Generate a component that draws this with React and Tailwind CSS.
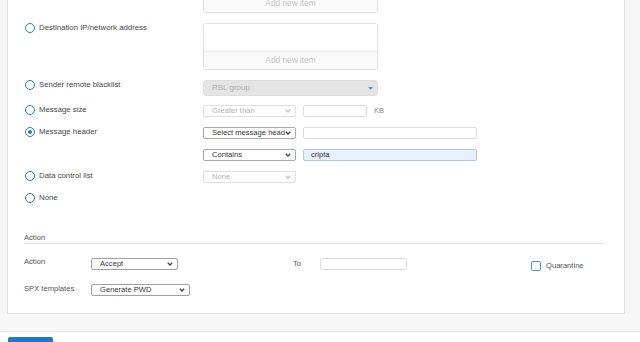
import React from "react";

const font = { fontFamily: '"Liberation Sans", Arial, sans-serif' };

function Radio({ checked, label }) {
  return (
    <div className="flex items-center h-[10px] gap-[4px]">
      <span className="w-[10px] h-[10px] rounded-full border-[1.6px] border-[#2a78c2] flex items-center justify-center shrink-0">
        {checked && <span className="w-[3.5px] h-[3.5px] rounded-full bg-[#2a78c2]" />}
      </span>
      <span className="text-[7.8px] leading-[10px] text-[#474747] whitespace-nowrap">{label}</span>
    </div>
  );
}

function Chevron({ color }) {
  return (
    <svg width="6" height="4" viewBox="0 0 6 4" className="shrink-0">
      <path d="M0.8 0.8 L3 3 L5.2 0.8" fill="none" stroke={color} strokeWidth="1.3" />
    </svg>
  );
}

function Select({ text, disabled, w, border }) {
  return (
    <div
      className={`${w} h-[12px] flex items-center justify-between pl-[8px] pr-[4px] rounded-[2px] border bg-white ${
        border ? border : disabled ? "border-[#e0e0e0]" : "border-[#a8a8a8]"
      }`}
    >
      <span
        className={`text-[7.6px] leading-[10px] whitespace-nowrap overflow-hidden ${
          disabled ? "text-[#b4b4b4]" : "text-[#383838]"
        }`}
      >
        {text}
      </span>
      <Chevron color={disabled ? "#c4c4c4" : "#444"} />
    </div>
  );
}

function ItemBox() {
  return (
    <div className="w-[175px] h-[47px] border border-[#e2e2e2] rounded-[3px] flex flex-col overflow-hidden">
      <div className="flex-1 bg-white" />
      <div className="h-[18px] bg-[#fafafa] border-t border-[#ececec] flex items-center justify-center text-[8.3px] text-[#c4c4c4]">
        Add new item
      </div>
    </div>
  );
}

function Row({ label, checked, children }) {
  return (
    <div className="flex items-start">
      <div className="w-[179px] shrink-0 pl-[1px]">{label && <Radio checked={checked} label={label} />}</div>
      <div className="flex items-center gap-[7px]">{children}</div>
    </div>
  );
}

export default function App() {
  return (
    <div className="w-[640px] h-[342px] overflow-hidden bg-[#f7f7f7] flex flex-col" style={font}>
      <div className="mt-[-40px] ml-[7px] mr-[15px] bg-white border-l border-r border-b border-[#e3e3e3] pl-[16px] pr-[19px] pt-[6px] pb-[17px]">
        <div className="flex flex-col">
          <Row>
            <ItemBox />
          </Row>
          <div className="h-[10px]" />
          <Row label="Destination IP/network address">
            <ItemBox />
          </Row>
          <div className="h-[10px]" />
          <Row label="Sender remote blacklist">
            <div className="w-[175px] h-[16px] rounded-[3px] bg-[#e4e4e4] border border-[#dedede] flex items-center justify-between pl-[8px] pr-[4px]">
              <span className="text-[8px] text-[#b0b0b0]">RBL group</span>
              <svg width="5" height="3" viewBox="0 0 5 3">
                <path d="M0 0 L5 0 L2.5 3 Z" fill="#4a9ad8" />
              </svg>
            </div>
          </Row>
          <div className="h-[9px]" />
          <Row label="Message size">
            <Select text="Greater than" disabled w="w-[93px]" />
            <div className="w-[64px] h-[12px] border border-[#dcdcdc] rounded-[2px] bg-white" />
            <span className="text-[7.6px] text-[#8a8a8a]">KB</span>
          </Row>
          <div className="h-[10px]" />
          <Row label="Message header" checked>
            <Select text="Select message header" w="w-[93px]" />
            <div className="w-[174px] h-[12px] border border-[#dcdcdc] rounded-[2px] bg-white" />
          </Row>
          <div className="h-[10px]" />
          <Row>
            <Select text="Contains" w="w-[93px]" />
            <div className="w-[174px] h-[12px] border border-[#b9c6d8] rounded-[2px] bg-[#e8f0fe] flex items-center pl-[7px] text-[7.6px] text-[#333]">
              cripta
            </div>
          </Row>
          <div className="h-[10px]" />
          <Row label="Data control list">
            <Select text="None" disabled w="w-[93px]" />
          </Row>
          <div className="h-[10px]" />
          <Row label="None" />
        </div>

        <div className="mt-[30px] h-[11px] border-b border-[#e6e6e6] text-[7.6px] leading-[10px] text-[#555]">Action</div>

        <div className="mt-[14px] flex items-start h-[12px]">
          <div className="w-[67px] text-[7.6px] leading-[10px] text-[#555] mt-[-1px]">Action</div>
          <Select text="Accept" w="w-[87px]" border="border-[#a0a0a0]" />
          <div className="w-[115px]" />
          <div className="w-[27px] text-[7.6px] leading-[10px] text-[#555] mt-[1px]">To</div>
          <div className="w-[87px] h-[12px] border border-[#dcdcdc] rounded-[2px] bg-white" />
          <div className="w-[124px]" />
          <div className="flex items-center gap-[5px] mt-[3px]">
            <span className="w-[10px] h-[10px] rounded-[2px] border-[1.5px] border-[#4a8fd0] bg-white" />
            <span className="text-[7.6px] leading-[10px] text-[#555]">Quarantine</span>
          </div>
        </div>

        <div className="mt-[14px] flex items-start h-[12px]">
          <div className="w-[67px] text-[7.6px] leading-[10px] text-[#555] mt-[0px]">SPX templates</div>
          <Select text="Generate PWD" w="w-[99px]" border="border-[#a0a0a0]" />
        </div>
      </div>

      <div className="mt-[17px] flex-1 bg-white border-t border-[#e3e3e3] flex items-start pt-[5px] pl-[8px] gap-[15px]">
        <div className="w-[45px] h-[20px] rounded-[2px] bg-[#1a7cc9] flex justify-center pt-[5px] text-[8px] text-white">Save</div>
        <div className="text-[8px] text-[#1a7cc9] pt-[5px]">Cancel</div>
      </div>
    </div>
  );
}
